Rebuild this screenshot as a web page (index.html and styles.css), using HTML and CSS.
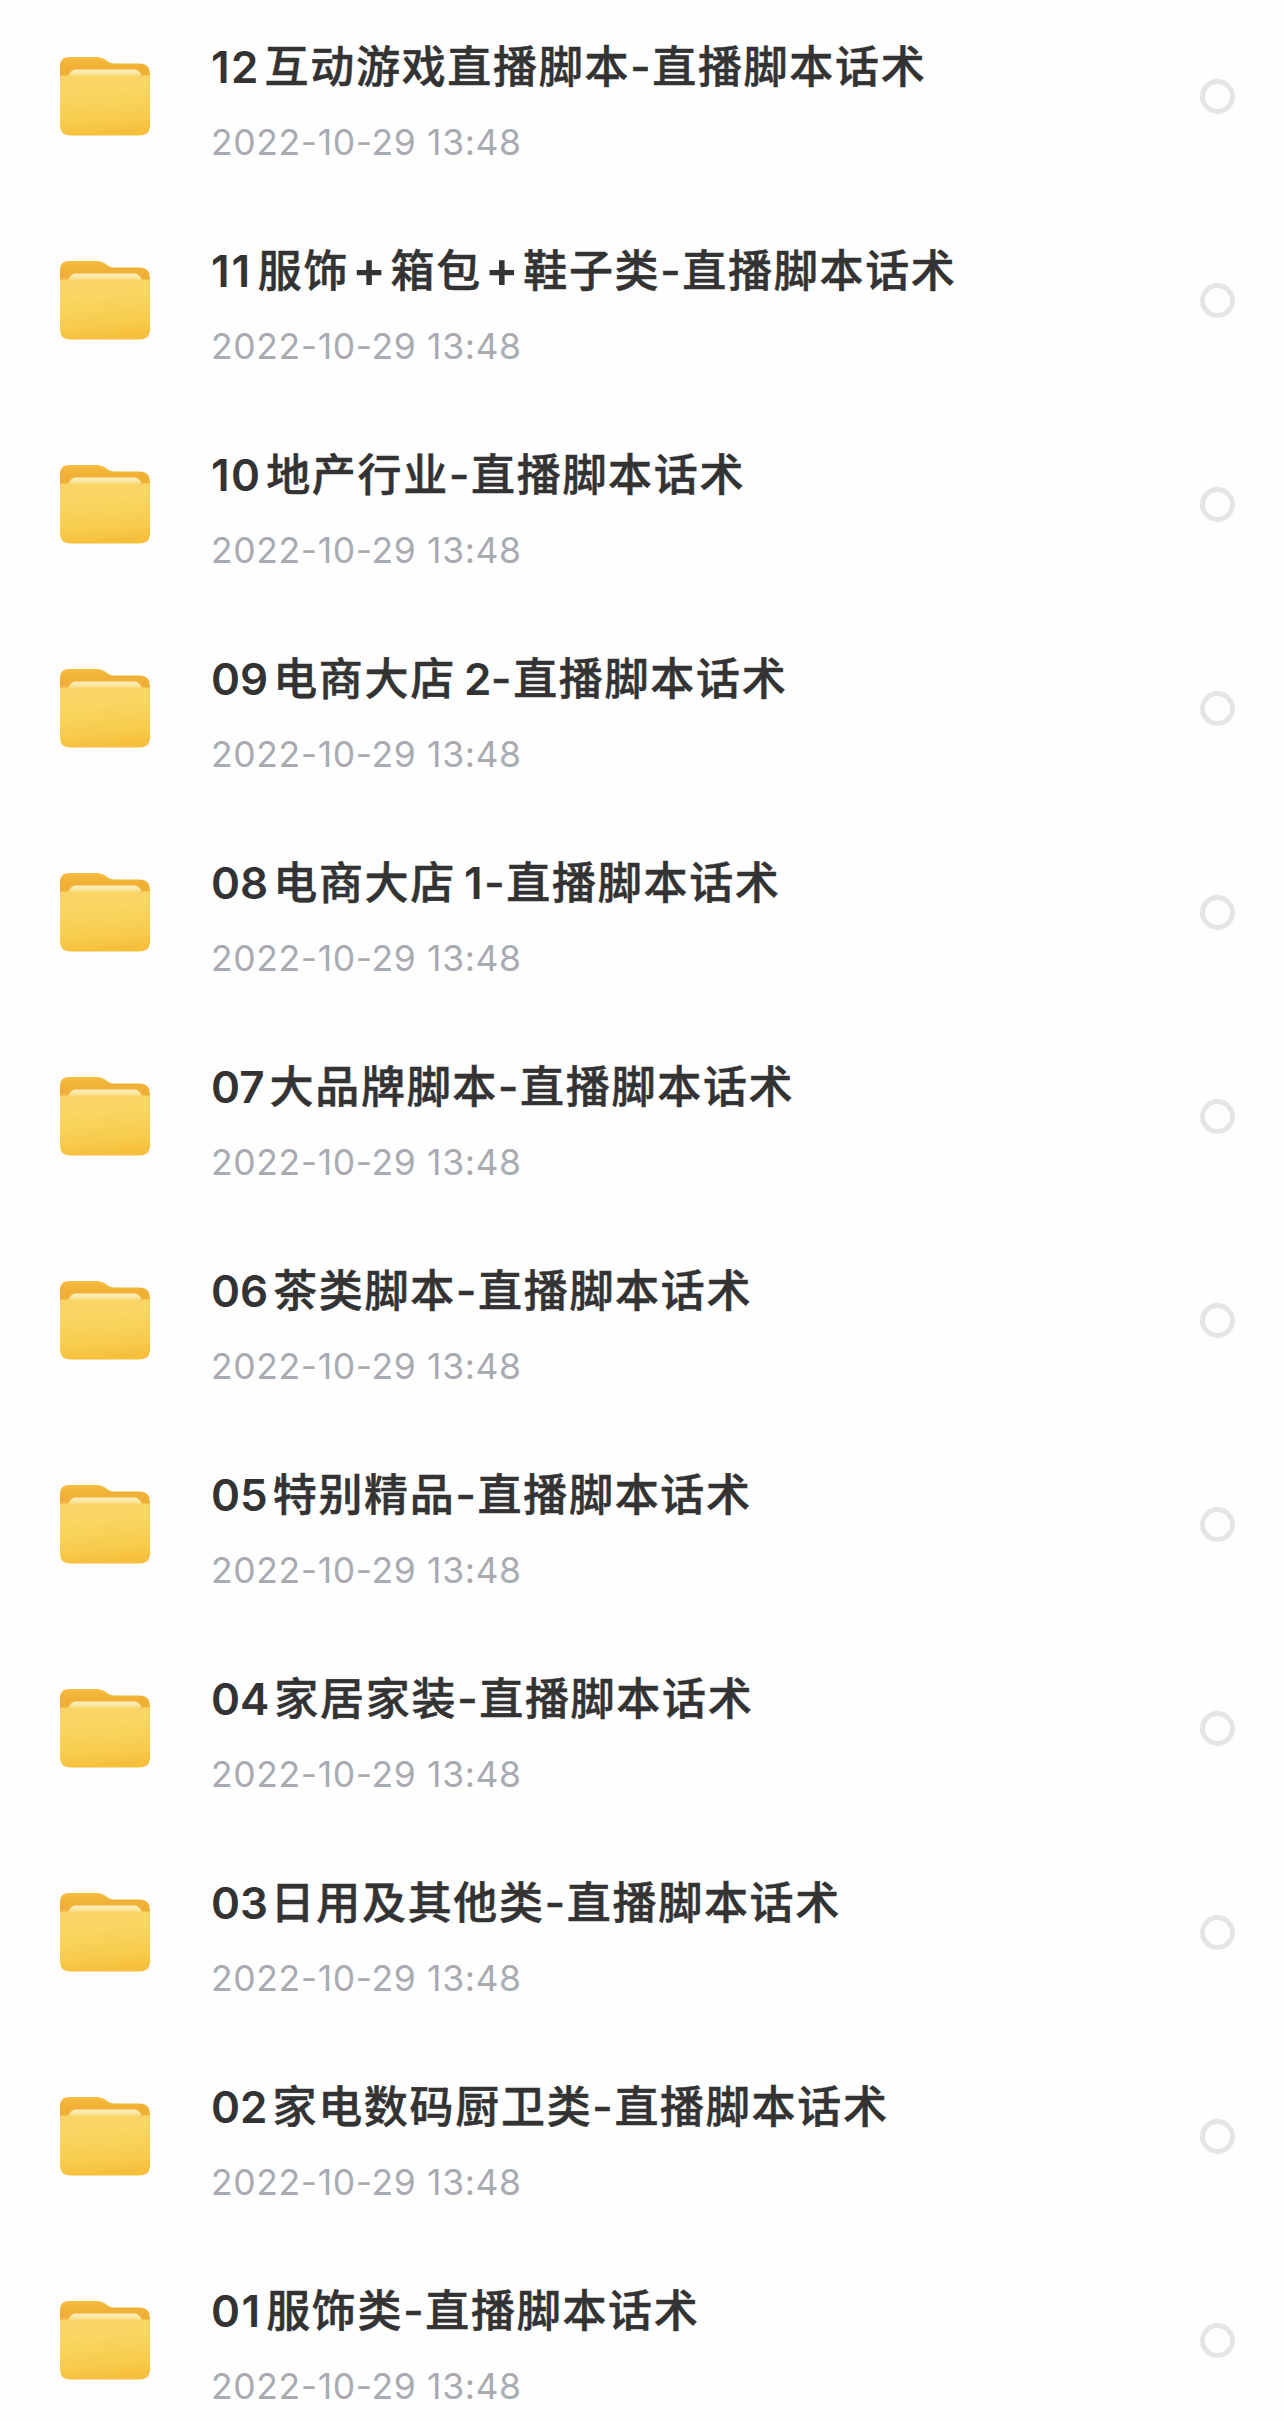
FILE: index.html
```html
<!DOCTYPE html>
<html lang="zh-CN">
<head>
<meta charset="utf-8">
<title>直播脚本话术</title>
<link rel="stylesheet" href="styles.css">
</head>
<body>
<svg class="defs" width="0" height="0" aria-hidden="true">
  <defs>
    <linearGradient id="back" x1="0" y1="0" x2="0" y2="1"><stop offset="0" stop-color="#f7bd41"/><stop offset=".3" stop-color="#f0b136"/></linearGradient>
    <linearGradient id="front" x1="0" y1="0" x2=".12" y2="1"><stop offset="0" stop-color="#f8d368"/><stop offset=".3" stop-color="#f9d763"/><stop offset=".8" stop-color="#f7cb4c"/><stop offset="1" stop-color="#f6c03c"/></linearGradient>
    <linearGradient id="paper" x1="0" y1="0" x2="0" y2="1"><stop offset="0" stop-color="#fff0bd"/><stop offset="1" stop-color="#f9da82"/></linearGradient>
    <symbol id="folder" viewBox="0 0 90 79">
      <path fill="url(#back)" d="M0 30V9Q0 0 9 0H37Q42 0 45 2.500L48.500 5Q51 6.500 55 6.500H80Q90 6.500 90 17V30Z"/>
      <path fill="url(#paper)" d="M8 20Q10 12.500 16 12.500H74Q80 12.500 82 20Z"/>
      <path fill="url(#front)" d="M0 18.500H90V68Q90 78.500 79.500 78.500H10.500Q0 78.500 0 68Z"/>
    </symbol>
  </defs>
</svg>
<ul class="list">
  <li class="row"><svg class="folder"><use href="#folder"/></svg><div class="info"><div class="title"><span class="num wide">12</span>互动游戏直播脚本-直播脚本话术</div><div class="date">2022-10-29 13:48</div></div><span class="radio"></span></li>
  <li class="row"><svg class="folder"><use href="#folder"/></svg><div class="info"><div class="title"><span class="num wider">11</span>服饰<span class="plus">+</span>箱包<span class="plus">+</span>鞋子类-直播脚本话术</div><div class="date">2022-10-29 13:48</div></div><span class="radio"></span></li>
  <li class="row"><svg class="folder"><use href="#folder"/></svg><div class="info"><div class="title"><span class="num wide">10</span>地产行业-直播脚本话术</div><div class="date">2022-10-29 13:48</div></div><span class="radio"></span></li>
  <li class="row"><svg class="folder"><use href="#folder"/></svg><div class="info"><div class="title"><span class="num">09</span>电商大店<span class="mid">2</span>-直播脚本话术</div><div class="date">2022-10-29 13:48</div></div><span class="radio"></span></li>
  <li class="row"><svg class="folder"><use href="#folder"/></svg><div class="info"><div class="title"><span class="num">08</span>电商大店<span class="mid one">1</span>-直播脚本话术</div><div class="date">2022-10-29 13:48</div></div><span class="radio"></span></li>
  <li class="row"><svg class="folder"><use href="#folder"/></svg><div class="info"><div class="title"><span class="num">07</span>大品牌脚本-直播脚本话术</div><div class="date">2022-10-29 13:48</div></div><span class="radio"></span></li>
  <li class="row"><svg class="folder"><use href="#folder"/></svg><div class="info"><div class="title"><span class="num">06</span>茶类脚本-直播脚本话术</div><div class="date">2022-10-29 13:48</div></div><span class="radio"></span></li>
  <li class="row"><svg class="folder"><use href="#folder"/></svg><div class="info"><div class="title"><span class="num">05</span>特别精品-直播脚本话术</div><div class="date">2022-10-29 13:48</div></div><span class="radio"></span></li>
  <li class="row"><svg class="folder"><use href="#folder"/></svg><div class="info"><div class="title"><span class="num">04</span>家居家装-直播脚本话术</div><div class="date">2022-10-29 13:48</div></div><span class="radio"></span></li>
  <li class="row"><svg class="folder"><use href="#folder"/></svg><div class="info"><div class="title"><span class="num tight">03</span>日用及其他类-直播脚本话术</div><div class="date">2022-10-29 13:48</div></div><span class="radio"></span></li>
  <li class="row"><svg class="folder"><use href="#folder"/></svg><div class="info"><div class="title"><span class="num">02</span>家电数码厨卫类-直播脚本话术</div><div class="date">2022-10-29 13:48</div></div><span class="radio"></span></li>
  <li class="row"><svg class="folder"><use href="#folder"/></svg><div class="info"><div class="title"><span class="num wide">01</span>服饰类-直播脚本话术</div><div class="date">2022-10-29 13:48</div></div><span class="radio"></span></li>
</ul>
</body>
</html>
```
FILE: styles.css
```css
* { box-sizing: border-box; }
body {
  margin: 0;
  background: #fefefe;
  font-family: Inter, "Noto Sans CJK SC", sans-serif;
  overflow: hidden;
}
.defs { display: block; }
.list { margin: 0; padding: 0; list-style: none; height: 2421px; overflow: hidden; }
.row {
  display: flex;
  align-items: center;
  height: 204px;
  padding: 0 49px 12px 60px;
}
.folder { flex: none; width: 90px; height: 79px; }
.info { flex: 1; margin-left: 61px; padding-top: 17px; white-space: nowrap; }
.title {
  height: 76px;
  line-height: 76px;
  font-size: 44px;
  font-weight: 500;
  letter-spacing: 1.7px;
  -webkit-text-stroke: 0.5px #333;
  color: #333;
}
.num, .mid, .plus { font-weight: 600; -webkit-text-stroke: 0; }
.num { margin-right: 5px; letter-spacing: 0; }
.num.wide { margin-right: 4.5px; letter-spacing: 1.5px; }
.num.wider { margin-right: 5.5px; letter-spacing: 2px; }
.num.tight { margin-right: 2.5px; }
.plus { margin: 0 3px; font-size: 50px; line-height: 1; }
.mid { margin-left: 8px; margin-right: -2px; }
.mid.one { margin-right: 0; }
.date {
  height: 76px;
  line-height: 76px;
  font-size: 35.5px;
  letter-spacing: 0.62px;
  color: #a9abb3;
}
.radio {
  flex: none;
  width: 35px;
  height: 35px;
  border: 5px solid #e5e5e5;
  border-radius: 50%;
}
```
